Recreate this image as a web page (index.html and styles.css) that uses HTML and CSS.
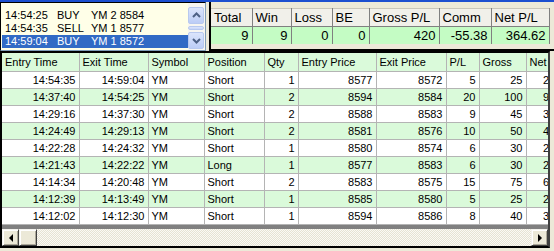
FILE: index.html
```html
<!DOCTYPE html>
<html lang="en">
<head>
    <meta charset="UTF-8">
    <title>Trade Log</title>
    <link rel="stylesheet" href="styles.css">
</head>
<body>
    <div class="caption"></div>

    <div class="top">
        <div class="orders">
            <ul class="order-list">
                <li class="order"><span class="o-time">14:54:25</span><span class="o-side">BUY</span><span>YM 2 8584</span></li>
                <li class="order"><span class="o-time">14:54:35</span><span class="o-side">SELL</span><span>YM 1 8577</span></li>
                <li class="order selected"><span class="o-time">14:59:04</span><span class="o-side">BUY</span><span>YM 1 8572</span></li>
            </ul>
            <div class="vscroll">
                <div class="vbtn">
                    <svg width="15" height="15" viewBox="0 0 15 15"><polyline points="4,9 7.5,5.5 11,9" fill="none" stroke="#4d6185" stroke-width="2"/></svg>
                </div>
                <div class="vthumb"></div>
                <div class="vbtn">
                    <svg width="15" height="15" viewBox="0 0 15 15"><polyline points="4,6 7.5,9.5 11,6" fill="none" stroke="#4d6185" stroke-width="2"/></svg>
                </div>
            </div>
        </div>

        <div class="summary">
            <table class="sum-table">
                <colgroup>
                    <col style="width:41px"><col style="width:39px"><col style="width:41px"><col style="width:37px">
                    <col style="width:70px"><col style="width:52px"><col style="width:58px">
                </colgroup>
                <tr class="sum-head">
                    <td>Total</td><td>Win</td><td>Loss</td><td>BE</td><td>Gross P/L</td><td>Comm</td><td>Net P/L</td>
                </tr>
                <tr class="sum-vals">
                    <td>9</td><td>9</td><td>0</td><td>0</td><td>420</td><td>-55.38</td><td>364.62</td>
                </tr>
            </table>
        </div>
    </div>

    <div class="grid">
        <div class="grid-view">
            <table class="trades">
                <colgroup>
                    <col style="width:77px"><col style="width:69px"><col style="width:56px"><col style="width:60px">
                    <col style="width:34px"><col style="width:78px"><col style="width:70px"><col style="width:33px">
                    <col style="width:47px"><col style="width:48px">
                </colgroup>
                <tr class="head">
                    <td>Entry Time</td><td>Exit Time</td><td>Symbol</td><td>Position</td><td>Qty</td>
                    <td>Entry Price</td><td>Exit Price</td><td>P/L</td><td>Gross</td><td>Net</td>
                </tr>
                <tr><td class="num">14:54:35</td><td class="num">14:59:04</td><td>YM</td><td>Short</td><td class="num">1</td><td class="num">8577</td><td class="num">8572</td><td class="num">5</td><td class="num">25</td><td class="num">24.62</td></tr>
                <tr class="alt"><td class="num">14:37:40</td><td class="num">14:54:25</td><td>YM</td><td>Short</td><td class="num">2</td><td class="num">8594</td><td class="num">8584</td><td class="num">20</td><td class="num">100</td><td class="num">93.24</td></tr>
                <tr><td class="num">14:29:16</td><td class="num">14:37:30</td><td>YM</td><td>Short</td><td class="num">2</td><td class="num">8588</td><td class="num">8583</td><td class="num">9</td><td class="num">45</td><td class="num">38.24</td></tr>
                <tr class="alt"><td class="num">14:24:49</td><td class="num">14:29:13</td><td>YM</td><td>Short</td><td class="num">2</td><td class="num">8581</td><td class="num">8576</td><td class="num">10</td><td class="num">50</td><td class="num">43.24</td></tr>
                <tr><td class="num">14:22:28</td><td class="num">14:24:32</td><td>YM</td><td>Short</td><td class="num">1</td><td class="num">8580</td><td class="num">8574</td><td class="num">6</td><td class="num">30</td><td class="num">26.62</td></tr>
                <tr class="alt"><td class="num">14:21:43</td><td class="num">14:22:22</td><td>YM</td><td>Long</td><td class="num">1</td><td class="num">8577</td><td class="num">8583</td><td class="num">6</td><td class="num">30</td><td class="num">26.62</td></tr>
                <tr><td class="num">14:14:34</td><td class="num">14:20:48</td><td>YM</td><td>Short</td><td class="num">2</td><td class="num">8583</td><td class="num">8575</td><td class="num">15</td><td class="num">75</td><td class="num">68.24</td></tr>
                <tr class="alt"><td class="num">14:12:39</td><td class="num">14:13:49</td><td>YM</td><td>Short</td><td class="num">1</td><td class="num">8585</td><td class="num">8580</td><td class="num">5</td><td class="num">25</td><td class="num">21.62</td></tr>
                <tr><td class="num">14:12:02</td><td class="num">14:12:30</td><td>YM</td><td>Short</td><td class="num">1</td><td class="num">8594</td><td class="num">8586</td><td class="num">8</td><td class="num">40</td><td class="num">36.62</td></tr>
            </table>
        </div>
        <div class="hscroll">
            <div class="hbtn"><span class="arrow-left"></span></div>
            <div class="hthumb"></div>
            <div class="htrack"></div>
            <div class="hbtn"><span class="arrow-right"></span></div>
        </div>
    </div>
</body>
</html>
```

FILE: styles.css
```css
body {
    margin: 0;
    width: 554px;
    height: 251px;
    overflow: hidden;
    background-color: #ece9d8;
    font-family: "Liberation Sans", Arial, sans-serif;
}

.caption {
    height: 2px;
    background-color: #1c4fd0;
}

.top {
    display: flex;
    height: 49px;
}

/* order list (top left) */
.orders {
    display: flex;
    width: 206px;
    border-top: 1px solid #000;
    border-left: 1px solid #000;
    border-right: 1px solid #7f9db9;
    border-bottom: 1px solid #7f9db9;
    background-color: #ffffe8;
    box-sizing: border-box;
}

.order-list {
    list-style: none;
    margin: 0;
    padding: 6px 0 0 1px;
    flex: 1;
}

.order {
    display: flex;
    height: 13px;
    line-height: 13px;
    font-size: 11px;
    padding-left: 3px;
    color: #000;
}

.order.selected {
    background-color: #316ac5;
    color: white;
}

.o-time {
    width: 52px;
}

.o-side {
    width: 34px;
}

.vscroll {
    width: 16px;
    display: flex;
    flex-direction: column;
    padding: 4px 1px 1px 0;
    background-color: #f7f6f1;
}

.vbtn {
    height: 15px;
    border: 1px solid #b8c9ef;
    border-radius: 2px;
    background: linear-gradient(#dbe5fc, #bccdf6);
}

.vbtn svg {
    display: block;
}

.vthumb {
    height: 5px;
    margin: 2px 0;
    border: 1px solid #b8c9ef;
    border-radius: 2px;
    background: linear-gradient(#dbe5fc, #c6d5f8);
}

/* summary (top right) */
.summary {
    flex: 1;
    margin-left: 3px;
    padding-top: 6px;
    border-left: 2px solid #000;
    border-bottom: 2px solid #000;
    overflow: hidden;
}

.sum-table {
    border-collapse: collapse;
    table-layout: fixed;
    width: 338px;
    font-size: 13px;
}

.sum-table td {
    border-right: 1px solid #808080;
    padding: 0 3px;
    white-space: nowrap;
    overflow: hidden;
}

.sum-head td {
    height: 17px;
    background-color: #f1f0ea;
    border-top: 1px solid #c8c6bc;
    border-bottom: 1px solid #808080;
}

.sum-vals td {
    height: 17px;
    text-align: right;
    background-color: #c4fcc4;
}

/* trades grid */
.grid {
    width: 550px;
    border-top: 2px solid #000;
    border-left: 2px solid #000;
    border-right: 2px solid #404040;
    border-bottom: 2px solid #000;
    box-sizing: border-box;
}

.grid-view {
    height: 175px;
    overflow: hidden;
    background-color: #808080;
}

.trades {
    border-collapse: collapse;
    table-layout: fixed;
    width: 572px;
    font-size: 11px;
}

.trades td {
    height: 16px;
    padding: 0 3px;
    border-right: 1px solid #b4b4b4;
    border-bottom: 1px solid #b4b4b4;
    background-color: white;
    white-space: nowrap;
    overflow: hidden;
}

.trades .head td {
    height: 18px;
    background-color: #dafada;
}

.trades .alt td {
    background-color: #dafada;
}

.trades td.num {
    text-align: right;
}

/* horizontal scroll bar */
.hscroll {
    display: flex;
    height: 17px;
    border-top: 1px solid #808080;
}

.hbtn, .hthumb {
    width: 13px;
    height: 13px;
    background-color: #ece9d8;
    border-top: 1px solid #f4f3ee;
    border-left: 1px solid #f4f3ee;
    border-right: 1px solid #404040;
    border-bottom: 1px solid #404040;
    box-shadow: inset 1px 1px 0 white, inset -1px -1px 0 #aca899;
    padding: 1px;
    display: flex;
    align-items: center;
    justify-content: center;
}

.hthumb {
    width: 14px;
}

.htrack {
    flex: 1;
    background-color: #f6f5f0;
    background-image: repeating-conic-gradient(#e6e3d3 0 25%, #faf9f5 0 50%);
    background-size: 2px 2px;
}

.arrow-left {
    width: 0;
    height: 0;
    border-top: 4px solid transparent;
    border-bottom: 4px solid transparent;
    border-right: 4px solid #000;
}

.arrow-right {
    width: 0;
    height: 0;
    border-top: 4px solid transparent;
    border-bottom: 4px solid transparent;
    border-left: 4px solid #000;
}
```
